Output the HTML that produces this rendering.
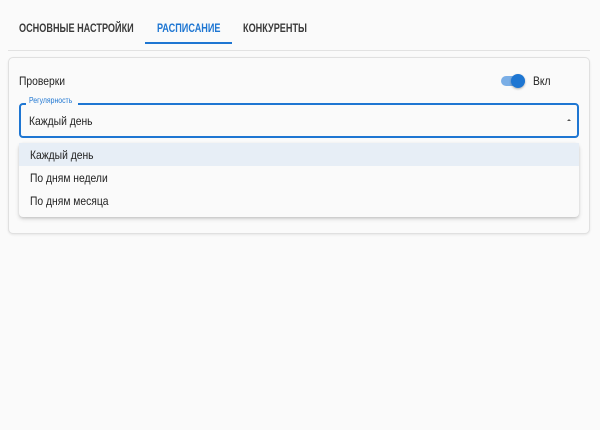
<!DOCTYPE html>
<html><head><meta charset="utf-8"><style>
*{box-sizing:border-box;margin:0;padding:0}
body{width:600px;height:430px;background:#fafafa;font-family:"Liberation Sans",sans-serif;color:#212121;position:relative;overflow:hidden}
.a{position:absolute}
.t{transform:scaleX(0.86);transform-origin:left center;white-space:nowrap}
.tab{position:absolute;top:21px;font-size:12px;font-weight:bold;color:#3a3a3a;transform:scaleX(0.76);transform-origin:left center;white-space:nowrap}
</style></head><body>
<div class="tab" style="left:19px">ОСНОВНЫЕ НАСТРОЙКИ</div>
<div class="tab" style="left:157px;color:#1e76d2">РАСПИСАНИЕ</div>
<div class="tab" style="left:243px">КОНКУРЕНТЫ</div>
<div class="a" style="left:145px;top:42px;width:87px;height:2px;background:#1e76d2"></div>
<div class="a" style="left:8px;top:50px;width:582px;height:1px;background:#e2e2e2"></div>
<div class="a" style="left:8px;top:57px;width:582px;height:177px;border:1px solid #e0e0e0;border-radius:5px;background:#fafafa;box-shadow:0 1px 2px rgba(0,0,0,.08)"></div>
<div class="a t" style="left:19px;top:74px;font-size:12px;color:#222">Проверки</div>
<div class="a" style="left:501px;top:76px;width:24px;height:10px;border-radius:5px;background:#7aaee6"></div>
<div class="a" style="left:511px;top:74px;width:14px;height:14px;border-radius:50%;background:#1e76d2;box-shadow:0 1px 2px rgba(0,0,0,.3)"></div>
<div class="a t" style="left:533px;top:74px;font-size:12px;color:#222">Вкл</div>
<div class="a" style="left:19px;top:103px;width:560px;height:35px;border:2px solid #1e76d2;border-radius:4px"></div>
<div class="a" style="left:26px;top:96px;width:52px;height:10px;background:#fafafa"></div>
<div class="a t" style="left:29px;top:96px;font-size:8px;color:#1e76d2">Регулярность</div>
<div class="a t" style="left:29px;top:114px;font-size:12px;color:#222">Каждый день</div>
<div class="a" style="left:567px;top:119px;width:0;height:0;border-left:2px solid transparent;border-right:2px solid transparent;border-bottom:2px solid #555"></div>
<div class="a" style="left:19px;top:143px;width:560px;height:74px;background:#fafafa;border-radius:4px;box-shadow:0 2px 4px rgba(0,0,0,.15),0 1px 2px rgba(0,0,0,.1)"></div>
<div class="a" style="left:19px;top:143px;width:560px;height:23px;background:#e7eef6"></div>
<div class="a t" style="left:30px;top:148px;font-size:12px;color:#222">Каждый день</div>
<div class="a t" style="left:30px;top:171px;font-size:12px;color:#222">По дням недели</div>
<div class="a t" style="left:30px;top:194px;font-size:12px;color:#222">По дням месяца</div>
</body></html>
